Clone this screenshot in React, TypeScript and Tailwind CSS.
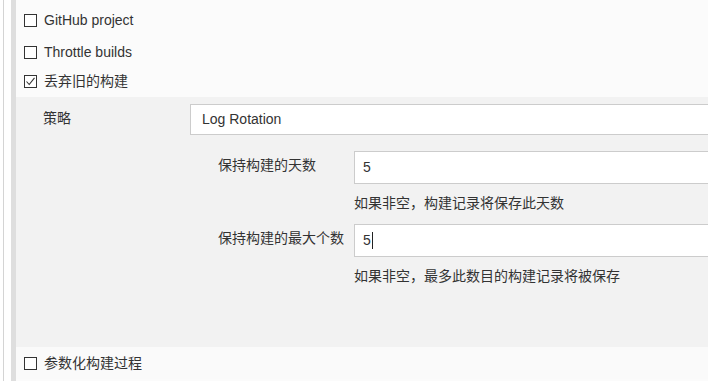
import React from 'react'

const font = { fontFamily: '"Liberation Sans", "Noto Sans CJK SC", Arial, sans-serif' }

function Box({ checked = false }: { checked?: boolean }) {
  return (
    <span className="flex h-[13px] w-[13px] shrink-0 items-center justify-center border border-[#333] bg-white">
      {checked && (
        <svg width="11" height="11" viewBox="0 0 11 11" fill="none">
          <path d="M1.5 5.5 L4.2 8.5 L9.5 1.8" stroke="#333" strokeWidth="1.1" />
        </svg>
      )}
    </span>
  )
}

function CheckRow({ label, checked, className = '' }: { label: string; checked?: boolean; className?: string }) {
  return (
    <div className={`flex items-center gap-[7px] pl-2 ${className}`}>
      <Box checked={checked} />
      <span>{label}</span>
    </div>
  )
}

function Field({ label, value, help, caret }: { label: string; value: string; help: string; caret?: boolean }) {
  return (
    <div className="flex flex-col">
      <div className="flex items-center">
        <div className="w-[138px] shrink-0 pl-[2px] pb-[4px]">{label}</div>
        <div className="-mr-5 flex h-[33px] flex-1 items-center border border-[#ccc] bg-white pl-[8px]">
          <span>{value}</span>
          {caret && <span className="ml-[1px] h-[17px] w-px bg-[#222]" />}
        </div>
      </div>
      <div className="ml-[138px] mt-[9px] mb-[10px]">{help}</div>
    </div>
  )
}

export default function App() {
  return (
    <div style={font} className="h-[381px] w-[708px] overflow-hidden bg-white pl-[3px] text-[14px] text-[#333]">
      <div className="h-full border-l border-[#d4d4d4] pl-[7px]">
        <div className="flex h-full flex-col border-l-[5px] border-[#dedede] bg-[#fbfbfb]">
          <div className="pt-[4px]">
            <CheckRow label="GitHub project" className="h-[32px]" />
            <CheckRow label="Throttle builds" className="h-[32px]" />
            <CheckRow label="丢弃旧的构建" checked className="h-[29px] pb-[3px]" />
          </div>

          <div className="flex h-[250px] flex-col bg-[#f2f2f2] pt-[7px]">
            <div className="flex items-center">
              <div className="w-[174px] shrink-0 pl-[27px] pb-[2px]">策略</div>
              <div className="-mr-5 flex h-[31px] flex-1 items-center border border-[#ccc] bg-white pl-[11px]">
                Log Rotation
              </div>
            </div>
            <div className="mt-[16px] pl-[200px]">
              <Field label="保持构建的天数" value="5" help="如果非空，构建记录将保存此天数" />
              <Field label="保持构建的最大个数" value="5" caret help="如果非空，最多此数目的构建记录将被保存" />
            </div>
          </div>

          <CheckRow label="参数化构建过程" className="h-[32px] bg-[#fafafa]" />
        </div>
      </div>
    </div>
  )
}
